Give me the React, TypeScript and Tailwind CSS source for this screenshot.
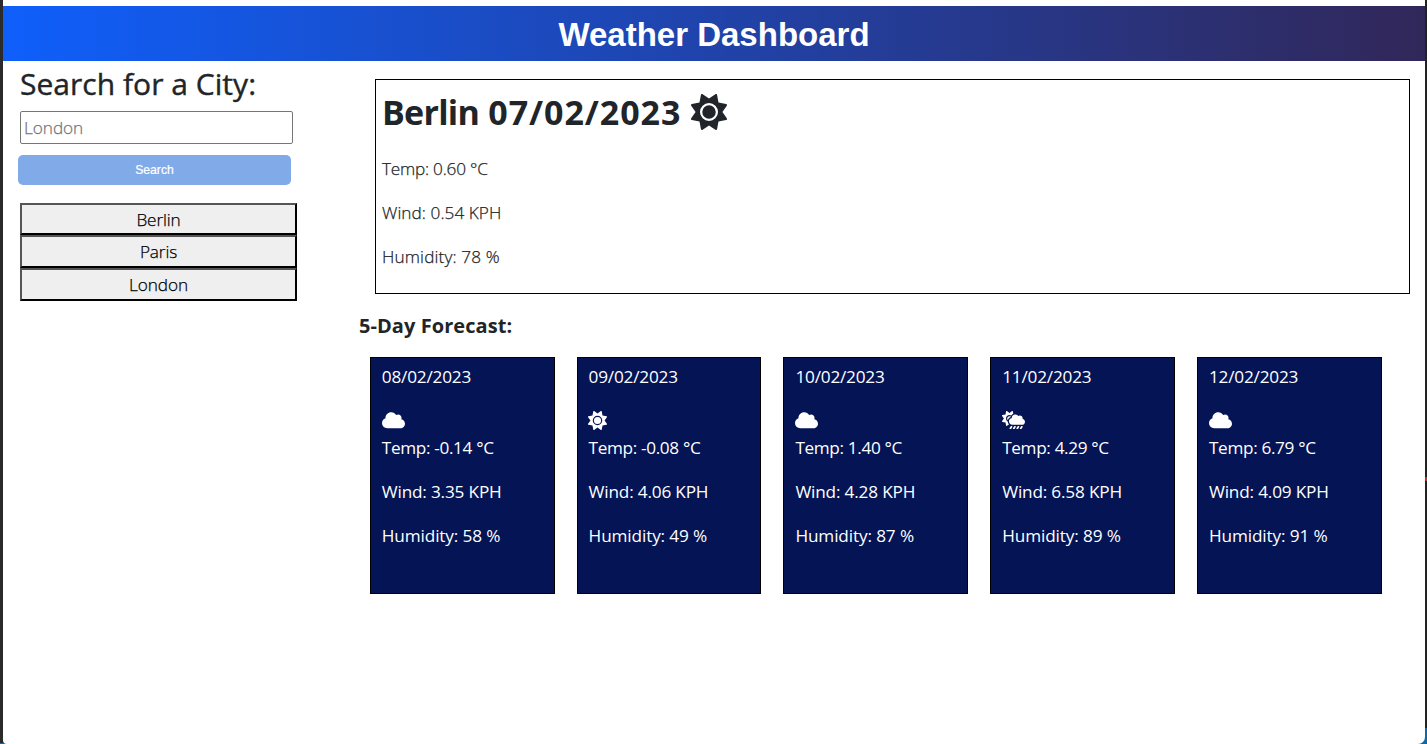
import { FaCloud, FaCloudSunRain, FaSun } from "react-icons/fa6";
import type { IconType } from "react-icons";

type Day = { date: string; icon: IconType; iconClass: string; temp: string; wind: string; humidity: string };

const CLOUD = "h-[18.4px] w-[23px]";
const SUN = "size-[19px] -ml-[0.5px]";

const days: Day[] = [
  { date: "08/02/2023", icon: FaCloud, iconClass: CLOUD, temp: "-0.14", wind: "3.35", humidity: "58" },
  { date: "09/02/2023", icon: FaSun, iconClass: SUN, temp: "-0.08", wind: "4.06", humidity: "49" },
  { date: "10/02/2023", icon: FaCloud, iconClass: CLOUD, temp: "1.40", wind: "4.28", humidity: "87" },
  { date: "11/02/2023", icon: FaCloudSunRain, iconClass: CLOUD, temp: "4.29", wind: "6.58", humidity: "89" },
  { date: "12/02/2023", icon: FaCloud, iconClass: CLOUD, temp: "6.79", wind: "4.09", humidity: "91" },
];

const history = ["Berlin", "Paris", "London"];

function ForecastCard({ day }: { day: Day }) {
  const Icon = day.icon;
  return (
    <article className="h-[237px] w-[184.8px] border border-black bg-[#041455] pl-[11px] pt-[5px] text-[17.2px] leading-[27px] text-white">
      <p className="tracking-[-0.2px]">{day.date}</p>
      <div className="mt-[20.6px] h-[18.4px]">
        <Icon className={day.iconClass} />
      </div>
      <p className="mt-[5px] tracking-[-0.35px]">Temp: {day.temp} °C</p>
      <p className="mt-[17px] tracking-[-0.18px]">Wind: {day.wind} KPH</p>
      <p className="mt-[17px] tracking-[-0.13px]">Humidity: {day.humidity} %</p>
    </article>
  );
}

export default function App() {
  return (
    <div className="h-[744px] w-[1427px] overflow-hidden bg-[linear-gradient(to_bottom,#2b2b2b_743px,#0a6aa8_743px)] font-['Open_Sans','Noto_Sans',sans-serif] text-[#212529]">
      <div className="ml-[3px] h-[744px] bg-[linear-gradient(to_bottom,#222_477px,#d81b45_477px,#d81b45_481px,#222_481px,#222_728px,#0a6aa8_728px)] bg-[length:100px_744px] bg-right bg-no-repeat pr-[2px]">
        <div className="h-[744px] rounded-bl-[4px] rounded-br-[7px] bg-white pt-1.5">
          <header className="h-[55px] bg-[linear-gradient(to_right,#0f5ffb,#312759)] text-center font-['Liberation_Sans',Arial,sans-serif] text-[33px] font-bold leading-[57px] text-white">
            Weather Dashboard
          </header>
          <div className="flex">
            <aside className="w-[356px] pl-[17px]">
              <h2 className="whitespace-nowrap pt-[5px] text-[30px] font-medium leading-[36px] tracking-[0.03px] [-webkit-text-stroke:0.4px_#212529]">
                Search for a City:
              </h2>
              <input
                className="mt-[9px] block h-[33px] w-[273px] rounded-[2px] border border-[#767676] px-[3px] text-[17.2px] font-light tracking-[-0.05px] [-webkit-text-stroke:0.25px_#757575] placeholder:text-[#757575]"
                placeholder="London"
              />
              <button className="-ml-0.5 mt-[11px] block h-[30px] w-[273px] rounded-[5px] bg-[#80abe8] font-['Liberation_Sans',Arial,sans-serif] text-[12.2px] text-white [-webkit-text-stroke:0.2px_#fff]">
                Search
              </button>
              <div className="mt-[17.8px] flex w-[277px] flex-col">
                {history.map((city) => (
                  <button
                    key={city}
                    className="h-[32.6px] border-2 border-b-black border-l-[#555] border-r-black border-t-[#555] bg-[#efefef] text-[17.2px] font-light leading-[27px] tracking-[-0.1px] text-black [-webkit-text-stroke:0.25px_#000]"
                  >
                    {city}
                  </button>
                ))}
              </div>
            </aside>
            <main className="flex-1">
              <section className="ml-4 mt-[18px] h-[215px] w-[1035px] border border-black pl-1.5 pt-[11px]">
                <h1 className="flex items-center text-[34px] font-bold leading-[42px]">
                  <span className="whitespace-pre">
                    <span className="tracking-[-0.72px]">Berlin </span>
                    <span className="ml-px tracking-[0.95px]">07/02/2023</span>
                  </span>
                  <FaSun className="ml-[9.5px] size-9" />
                </h1>
                <div className="mt-[22px] flex flex-col gap-[17px] text-[17.2px] font-light leading-[27px] [-webkit-text-stroke:0.25px_#212529]">
                  <p className="tracking-[-0.22px]">Temp: 0.60 °C</p>
                  <p className="tracking-[0.06px]">Wind: 0.54 KPH</p>
                  <p className="tracking-[0.14px]">Humidity: 78 %</p>
                </div>
              </section>
              <h3 className="mt-[18px] text-[20px] font-bold leading-[27px] tracking-[0.06px]">5-Day Forecast:</h3>
              <div className="ml-[10.8px] mt-[18px] flex gap-[22px]">
                {days.map((day) => (
                  <ForecastCard key={day.date} day={day} />
                ))}
              </div>
            </main>
          </div>
        </div>
      </div>
    </div>
  );
}
